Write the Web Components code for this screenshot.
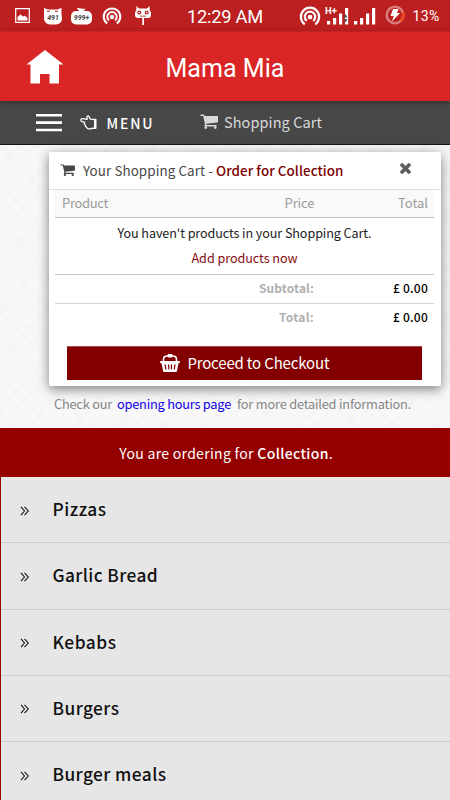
<!DOCTYPE html>
<html lang="en">
<head>
<meta charset="utf-8">
<title>Mama Mia</title>
<style>
body{margin:0;width:450px;height:800px;overflow:hidden;font-family:"Noto Sans CJK SC","Noto Sans",sans-serif;background:#f6f6f6}
</style>
</head>
<body>
<mama-app></mama-app>
<script>
const define = (name, css, html, init) => {
  const t = document.createElement('template');
  t.innerHTML = `<style>${css}</style>${html}`;
  customElements.define(name, class extends HTMLElement {
    connectedCallback() {
      if (this.shadowRoot) return;
      this.attachShadow({mode: 'open'}).append(t.content.cloneNode(true));
      if (init) init(this);
    }
  });
};

/* A single line of text tracked to a given run length. */
define('fit-text', `:host{display:inline-block;white-space:pre;flex:none}`, `<slot></slot>`, el => {
  const want = parseFloat(el.getAttribute('w'));
  const n = el.textContent.length;
  const have = el.getBoundingClientRect().width;
  el.style.letterSpacing = ((want - have) / n).toFixed(3) + 'px';
});

const CART = `<path d="M640 1536q0 52-38 90t-90 38-90-38-38-90 38-90 90-38 90 38 38 90zm896 0q0 52-38 90t-90 38-90-38-38-90 38-90 90-38 90 38 38 90zm128-1088v512q0 24-16.500 42.500t-40.500 21.500l-1044 122q13 60 13 70 0 16-24 64h920q26 0 45 19t19 45-19 45-45 19h-1024q-26 0-45-19t-19-45q0-11 8-31.500t16-36 21.500-40 15.500-29.500l-177-823h-204q-26 0-45-19t-19-45 19-45 45-19h256q16 0 28.500 6.500t19.500 15.500 13 24.500 8 26 5.500 29.500 4.500 26h1201q26 0 45 19t19 45z"/>`;
const HOTSPOT = `<g fill="none" stroke="#fff" stroke-width="2"><path d="M5.200 16.500A8.300 8.300 0 1 1 14.800 16.500"/><path d="M7 13.400A4.700 4.700 0 1 1 13 13.400"/></g><circle cx="10" cy="10" r="2.200" fill="#fff"/>`;
const ICONS = {
  cart: ['64 200 1600 1464', CART],
  times: ['302 366 1188 1188', `<path d="M1490 1322q0 40-28 68l-136 136q-28 28-68 28t-68-28l-294-294-294 294q-28 28-68 28t-68-28l-136-136q-28-28-28-68t28-68l294-294-294-294q-28-28-28-68t28-68l136-136q28-28 68-28t68 28l294 294 294-294q28-28 68-28t68 28l136 136q28 28 28 68t-28 68l-294 294 294 294q28 28 28 68z"/>`],
  home: ['0 0 38 34', `<path d="M19 0 37.500 14.500H33V33.500H23.500V24H14V33.500H4.500V14.500H.5z"/>`],
  bars: ['0 0 26 18', `<path d="M0 0h26v2.600H0zM0 7.300h26v2.600H0zM0 14.700h26v2.600H0z"/>`],
  hand: ['0 0 18 16', `<path fill="none" stroke="currentColor" stroke-width="1.350" stroke-linejoin="round" stroke-linecap="round" d="M13 4.800 10.600 4.200C10.200 2.300 9.300.6 8 1.200 6.700 1.900 7.400 3.300 7.600 4.600L2.600 3.900C.4 3.800.2 6.500 2.200 7.100L5 7.900C4.300 8.900 4.500 10 5.600 10.600 5.300 11.600 5.900 12.500 6.900 12.900 7.300 14.200 8.300 14.800 9.500 14.800H11.500L13.200 13.900M13.200 4.600H16.700V14.200H13.200"/><path d="M14.800 4.200h2.300v10.200h-2.300z"/>`],
  basket: ['0 0 20 18', `<path fill="none" stroke="currentColor" stroke-width="1.600" d="M3.500 8V5.500Q3.500 2 7 2H13Q16.500 2 16.500 5.500V8"/><rect x="7.500" y="0" width="5" height="3.600" rx="1"/><path fill-rule="evenodd" d="M1 7H19Q20 7 20 8T19 9.300H18.500L17 17Q16.800 18 15.800 18H4.200Q3.200 18 3 17L1.500 9.300H1Q0 9.300 0 8T1 7zM4.500 10.500 5.300 15.500H6.500L5.800 10.500zM8 10.500 8.200 15.500H9.300V10.500zM10.800 10.500V15.500H11.900L12.100 10.500zM14.300 10.500 13.600 15.500H14.800L15.600 10.500z"/>`],
  chevrons: ['0 0 10 10', `<path fill="none" stroke="currentColor" stroke-width="1.050" d="M1 .8 4.500 5 1 9.200M4.500 .8 8.300 5 4.500 9.200"/>`],
  picture: ['0 0 15 15', `<path fill="none" stroke="#fff" stroke-width="1.200" d="M.7.7H14.300V14.300H.7z"/><path fill="#fff" d="M2.500 12.500V9L5.500 6.500 8 8.500 10 7.800 12.500 10V12.500z"/>`],
  cat: ['0 0 20 18', `<path fill="#fff" d="M1 0 5 1.500H14L18.500 0V9H1z"/><path fill="#bb1f20" d="M4 3h3v1H4zM12 3h3v1H12z"/><rect x="1" y="4.500" width="18" height="13" rx="6" fill="#fff"/><text x="10" y="13" font-family="Roboto" font-size="7" font-weight="700" font-style="italic" text-anchor="middle" fill="#444">491</text>`],
  tv: ['0 0 21 17', `<path stroke="#fff" stroke-width="1.300" d="M6.500 0 10 4 14 1"/><rect x="0" y="3" width="21" height="13.500" rx="5" fill="#fff"/><text x="10.500" y="12.300" font-family="Roboto" font-size="7" font-weight="700" font-style="italic" text-anchor="middle" fill="#444">999+</text>`],
  hotspot: ['0 0 20 18', HOTSPOT],
  cid: ['0 0 16 19', `<path fill="#fff" d="M1.500 0 4 2.500H12L14.500 0 14.800 5Q16 5 16 7V9Q16 12 13 12H9V19H7.300V12H3Q0 12 0 9V7Q0 5 1.200 5z"/><circle cx="4.300" cy="6.500" r="2" fill="#bb1f20"/><circle cx="11.700" cy="6.500" r="2" fill="#bb1f20"/><circle cx="4.300" cy="6.500" r=".8" fill="#fff"/><circle cx="11.700" cy="6.500" r=".8" fill="#fff"/><path fill="#bb1f20" d="M5 9.700h6v.8H5z"/>`],
  signalh: ['0 0 25 19', `<path fill="#fff" d="M2 15h3.200v3.500H2zM8 12h3.200v6.500H8zM14 7.500h3.200v11H14zM20 2h3.200v16.500H20z"/><path fill="#555" d="M20.500 8 22.500 11.500H18.500zM20.500 16.500 22.500 13H18.500z"/><text x="0" y="8" font-family="Roboto" font-size="9.500" font-weight="700" fill="#fff">H+</text>`],
  signal: ['0 0 22 17', `<path fill="#fff" d="M0 13h3.200v3.500H0zM6 10h3.200v6.500H6zM12 5.500h3.200v11H12zM18 0h3.200v16.500H18z"/>`],
  charge: ['0 0 20 20', `<circle cx="10" cy="10" r="8.300" fill="none" stroke="#d97b7c" stroke-width="2.600"/><path d="M18 7.500A8.300 8.300 0 0 1 15.500 16" fill="none" stroke="#f04a1c" stroke-width="2.600"/><path fill="#fff" d="M8 4h5.500L12 8H15L7 16.500 8.700 11H5.500z"/>`]
};
customElements.define('ui-icon', class extends HTMLElement {
  connectedCallback() {
    const [box, body] = ICONS[this.getAttribute('name')];
    const root = this.shadowRoot || this.attachShadow({mode: 'open'});
    root.innerHTML = `<style>:host{display:block;flex:none;width:${this.getAttribute('w')}px;height:${this.getAttribute('h')}px}svg{display:block;width:100%;height:100%;overflow:visible}</style><svg viewBox="${box}" fill="currentColor" preserveAspectRatio="none">${body}</svg>`;
  }
});

define('status-bar', `
:host{display:flex;height:31px;background:#bb1f20;color:#fff;font-family:Roboto,sans-serif;box-sizing:border-box;padding-left:15px;align-items:flex-start}
ui-icon,fit-text{margin-top:var(--t);margin-left:var(--l,0)}
.time{font-size:18.300px;line-height:22px}.pct{font-size:14px;line-height:18px}
`, `
<ui-icon name="picture" w="15" h="15" style="--t:8px"></ui-icon>
<ui-icon name="cat" w="20" h="17" style="--t:8px;--l:13px"></ui-icon>
<ui-icon name="tv" w="21" h="17" style="--t:8px;--l:8px"></ui-icon>
<ui-icon name="hotspot" w="20" h="18" style="--t:7px;--l:10px"></ui-icon>
<ui-icon name="cid" w="16" h="19" style="--t:6px;--l:13px"></ui-icon>
<fit-text class="time" w="76" style="--t:6px;--l:36px">12:29 AM</fit-text>
<ui-icon name="hotspot" w="22" h="20" style="--t:6px;--l:36px"></ui-icon>
<ui-icon name="signalh" w="25" h="19" style="--t:6px;--l:4px"></ui-icon>
<ui-icon name="signal" w="22" h="17" style="--t:8px;--l:4px"></ui-icon>
<ui-icon name="charge" w="20" h="20" style="--t:5px;--l:9px"></ui-icon>
<fit-text class="pct" w="27" style="--t:7px;--l:7.500px">13%</fit-text>`);

define('app-header', `
:host{display:grid;grid-template-columns:1fr auto 1fr;align-items:center;height:70px;padding:0 26px;background:#d92526;color:#fff;box-shadow:0 2px 5px rgba(0,0,0,.3),inset 0 1px 0 #c52223;position:relative}
h1{margin:5px 0 0;font:400 25px/32px Roboto,sans-serif}
`, `<ui-icon name="home" w="38" h="34" style="margin-top:1px"></ui-icon><h1><fit-text w="119">Mama Mia</fit-text></h1><span></span>`);

define('tool-bar', `
:host{display:flex;height:43px;background:#474747;border-bottom:1px solid #151515;align-items:center;padding-left:36px;color:#fff}
.menu{font-weight:500;font-size:14px;line-height:20px;margin-left:8.500px}
.cart{font-size:14.500px;line-height:20px;color:#d9d9d9;margin:-2px 0 0 6px}
`, `<ui-icon name="bars" w="26" h="18"></ui-icon>
<ui-icon name="hand" w="17" h="15" style="margin-left:18px;margin-right:1px"></ui-icon>
<fit-text class="menu" w="48">MENU</fit-text>
<ui-icon name="cart" w="17" h="15" style="margin:-3px 0 0 46.500px;color:#d9d9d9"></ui-icon>
<fit-text class="cart" w="98">Shopping Cart</fit-text>`);

define('total-row', `
:host{display:grid;grid-template-columns:259px 1fr;justify-items:end;padding:0 6px 2px 0;height:26px;align-items:center;font-size:12px;line-height:18px;font-weight:700;color:#b0b0b0;border-bottom:1px solid var(--line,transparent)}
::slotted([slot=value]){color:#000;font-weight:500}
`, `<slot name="label"></slot><slot name="value"></slot>`);

define('cart-panel', `
:host{display:block;box-sizing:border-box;width:392px;height:234px;margin-left:49px;background:#fff;border-radius:2px;box-shadow:0 3px 12px rgba(0,0,0,.5)}
header{display:flex;align-items:center;height:37px;border-bottom:1px solid #dedede;padding:0 30px 0 12px;font-size:13.400px;line-height:20px;color:#484848}
header>fit-text,header>ui-icon:first-child{margin-top:-2px}
header .mode{font-weight:500;color:#7c0000}
header ui-icon:last-child{margin:-4px 0 0 auto;color:#5c5c5c}
.body{padding:0 7px 0 6px}
.cols{display:grid;grid-template-columns:auto 1fr auto;height:27px;background:#f9f9f9;border-bottom:1px solid #bdbdbd;padding:0 6px 0 7px;font-size:13px;line-height:25px;color:#9b9b9b}
.cols fit-text:nth-child(2){justify-self:end;margin-right:83.500px}
.empty{display:flex;flex-direction:column;align-items:center;height:54px;border-bottom:1px solid #c4c4c4;font-size:12.600px;line-height:25px;color:#222;padding:2px 0 0}
.empty a{color:#860b10}
button{all:unset;box-sizing:border-box;display:flex;align-items:center;justify-content:center;gap:7px;width:355px;height:34px;padding-bottom:1px;margin:13px 0 0 12.400px;background:#840000;border-top:1px solid #a05050;color:#fff;font-size:15px;line-height:22px}
button fit-text{margin-top:-1px}
`, `
<header><ui-icon name="cart" w="14" h="12"></ui-icon><fit-text w="133" style="margin-left:8px">Your Shopping Cart - </fit-text><fit-text class="mode" w="127.500">Order for Collection</fit-text><ui-icon name="times" w="11" h="11"></ui-icon></header>
<div class="body">
<div class="cols"><fit-text w="46">Product</fit-text><fit-text w="30">Price</fit-text><fit-text w="30">Total</fit-text></div>
<div class="empty"><fit-text w="254">You haven't products in your Shopping Cart.</fit-text><a><fit-text w="106">Add products now</fit-text></a></div>
<total-row style="--line:#d4d4d4"><fit-text slot="label" w="55">Subtotal:</fit-text><fit-text slot="value" w="35">£ 0.00</fit-text></total-row>
<total-row><fit-text slot="label" w="35">Total:</fit-text><fit-text slot="value" w="35">£ 0.00</fit-text></total-row>
<button><ui-icon name="basket" w="20" h="18"></ui-icon><fit-text w="142">Proceed to Checkout</fit-text></button>
</div>`);

define('cart-area', `
:host{display:block;box-sizing:border-box;height:283px;padding-top:7px;background:
repeating-linear-gradient(45deg,rgba(0,0,0,.010) 0 1px,transparent 2px 6px,rgba(0,0,0,.008) 8px 12px,transparent 14px 27px),
repeating-linear-gradient(-47deg,rgba(0,0,0,.010) 0 1px,transparent 2px 9px,rgba(0,0,0,.008) 11px 14px,transparent 16px 33px),#f8f8f8}
p{display:flex;margin:8px 0 0 54px;font-size:12.800px;line-height:20px;color:#858585}
a{color:#0f00e6;margin:0 6px 0 5px}
`, `<cart-panel></cart-panel><p><fit-text w="58">Check our</fit-text><a><fit-text w="114">opening hours page</fit-text></a><fit-text w="174">for more detailed information.</fit-text></p>`);

define('order-banner', `
:host{display:flex;height:49px;align-items:center;justify-content:center;background:#940000;color:#fff;font-size:14px;line-height:20px;padding:1px 0 0 2px;box-sizing:border-box}
b{font-weight:500}
`, `<fit-text w="138">You are ordering for </fit-text><b><fit-text w="71.500">Collection</fit-text></b><span>.</span>`);

define('menu-item', `
:host{display:flex;box-sizing:border-box;height:66.250px;border-bottom:1px solid #cacaca;align-items:center;padding:0 0 1px 19px;font-size:17.300px;font-weight:500;line-height:26px;color:#111}
ui-icon{margin:3px 22.500px 0 0}
`, `<ui-icon name="chevrons" w="10" h="10"></ui-icon><slot></slot>`);

define('menu-list', `:host{display:block;background:#e6e6e6;border-left:1px solid #940000}`, `
<menu-item><fit-text w="54">Pizzas</fit-text></menu-item>
<menu-item><fit-text w="105.500">Garlic Bread</fit-text></menu-item>
<menu-item><fit-text w="64">Kebabs</fit-text></menu-item>
<menu-item><fit-text w="67">Burgers</fit-text></menu-item>
<menu-item><fit-text w="114">Burger meals</fit-text></menu-item>`);

define('mama-app', `:host{display:block;width:450px;height:800px;overflow:hidden}`,
`<status-bar></status-bar><app-header></app-header><tool-bar></tool-bar><cart-area></cart-area><order-banner></order-banner><menu-list></menu-list>`);
</script>
</body>
</html>
